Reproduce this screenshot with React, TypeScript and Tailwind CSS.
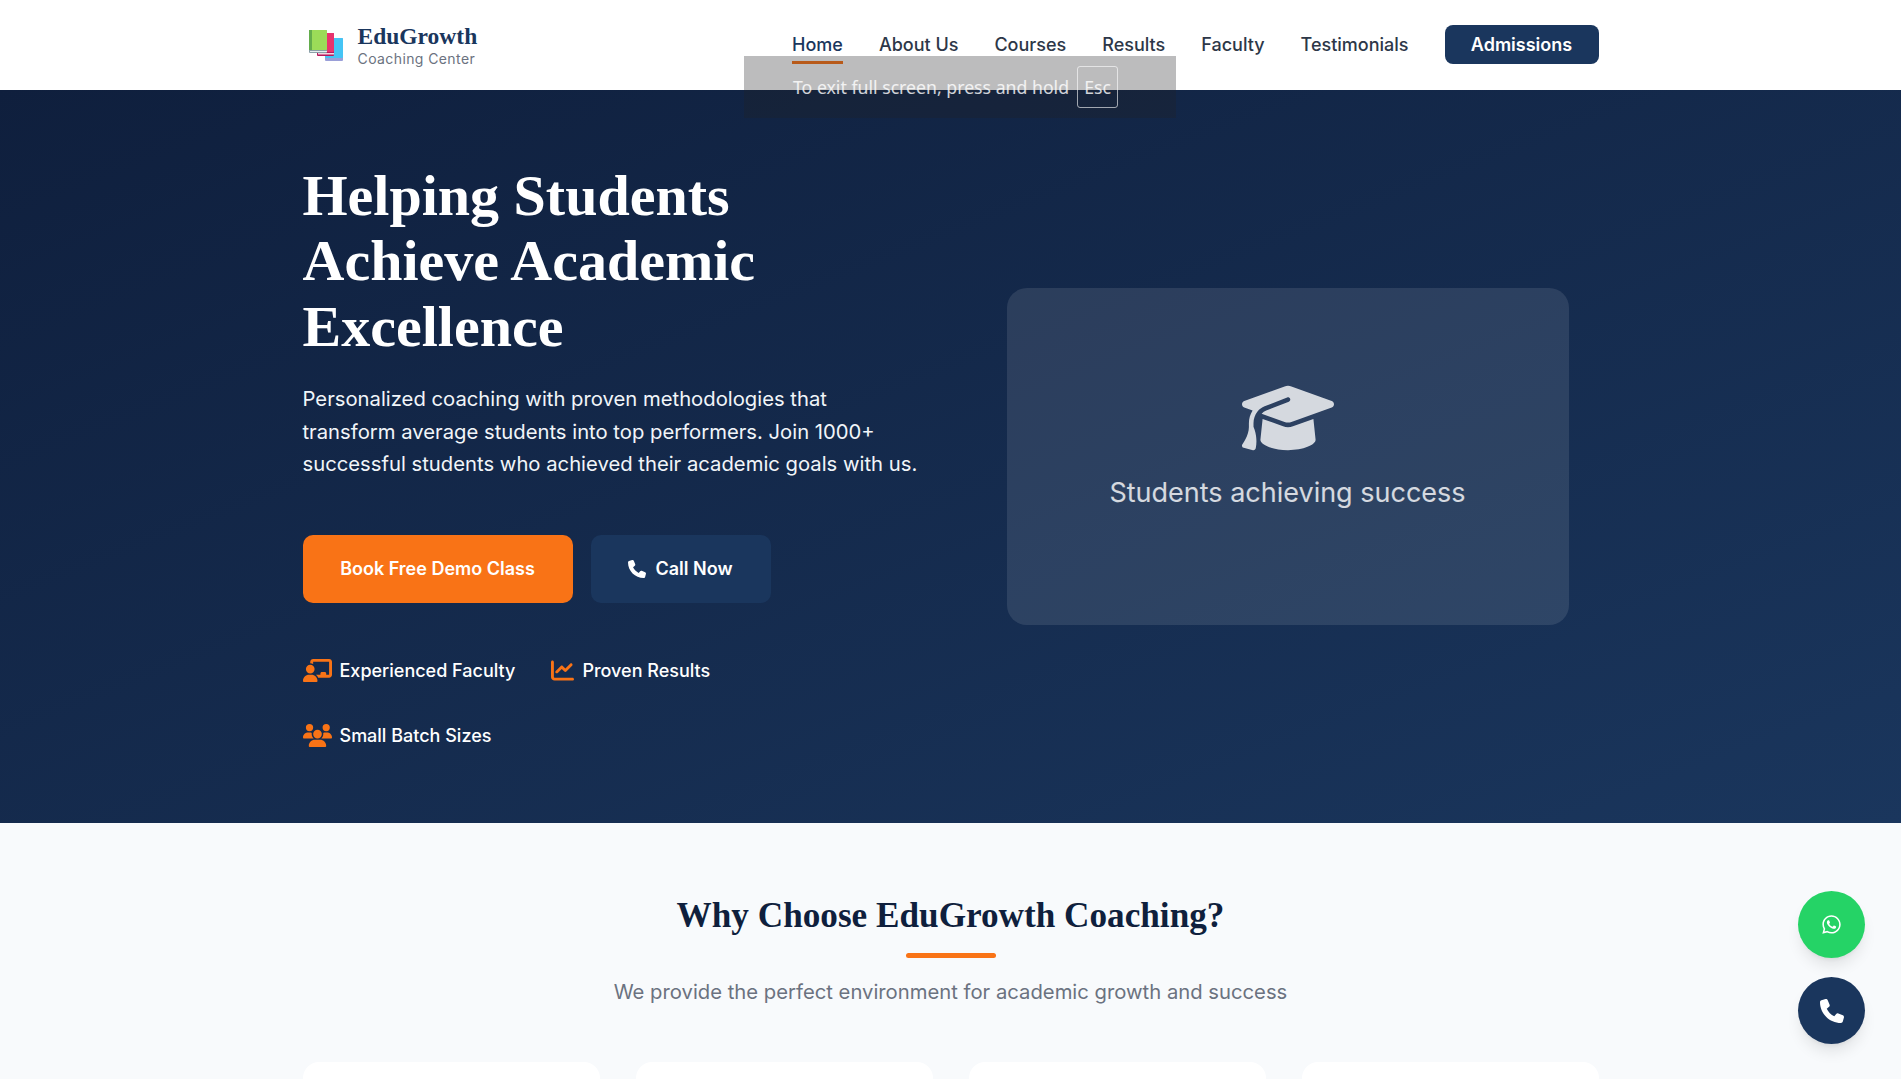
import { FaChalkboardUser, FaChartLine, FaGraduationCap, FaPhone, FaUsers, FaWhatsapp } from "react-icons/fa6";

const navLinks = ["About Us", "Courses", "Results", "Faculty", "Testimonials"];

function BooksLogo() {
  return (
    <svg width="34" height="31" viewBox="0 0 34 31" className="shrink-0 ml-[6px]">
      <rect x="16" y="8" width="18" height="23" rx="1" fill="#9a9fd8" />
      <rect x="16" y="8" width="18" height="20" rx="1" fill="#45c4f5" />
      <rect x="8" y="3" width="17" height="23" rx="1" fill="#b8175c" />
      <rect x="8" y="3" width="17" height="19" rx="1" fill="#e8336d" />
      <rect x="9" y="23" width="16" height="1.5" fill="#f3d5e0" />
      <rect x="0" y="0" width="18" height="23" rx="1" fill="#8aa0a8" />
      <rect x="0" y="0" width="18" height="20" rx="1" fill="#9bdc58" />
      <rect x="0" y="0" width="3" height="20" fill="#63ad4c" />
      <rect x="1" y="21" width="17" height="1" fill="#e5eef0" />
    </svg>
  );
}

function Header() {
  return (
    <header className="bg-white h-[90px]">
      <div className="w-[1296px] mx-auto h-full flex items-center justify-between">
        <div className="flex items-center gap-[15px]">
          <BooksLogo />
          <div className="mb-[1px]">
            <div className="text-[23.5px] leading-[28px] font-bold text-[#1a365d] font-['Liberation_Serif',serif]">EduGrowth</div>
            <div className="text-[14px] leading-[18px] text-[#6b7280] tracking-[0.4px]">Coaching Center</div>
          </div>
        </div>
        <nav className="flex items-center gap-9 mb-[2px] text-[18px] font-medium text-[#2d3748]">
          <a className="relative text-[#1a365d] py-[6.5px]">
            Home
            <span className="absolute left-0 right-0 bottom-0 h-[3px] bg-[#f97316]" />
          </a>
          {navLinks.map((l) => (
            <a key={l} className="py-[6.5px]">{l}</a>
          ))}
          <button className="w-[154px] h-[39px] rounded-lg bg-[#1a365d] text-white font-semibold">Admissions</button>
        </nav>
      </div>
    </header>
  );
}

function Feature({ icon, label }: { icon: React.ReactNode; label: string }) {
  return (
    <div className="flex items-center gap-2 h-[24px] text-[18px] font-medium text-white">
      <span className="text-[#f97316] flex">{icon}</span>
      {label}
    </div>
  );
}

function Hero() {
  return (
    <section className="h-[733px] bg-gradient-to-br from-[#0f1f3d] to-[#1a365d]">
      <div className="w-[1296px] mx-auto h-full flex items-center justify-between pr-[30px]">
        <div className="w-[640px] mb-[2px]">
          <h1 className="text-[58px] leading-[65.3px] font-bold text-white font-['Liberation_Serif',serif]">
            Helping Students
            <br />
            Achieve Academic
            <br />
            Excellence
          </h1>
          <p className="mt-6 w-[616px] text-[20.25px] leading-[32.6px] text-[#f1f5f9]">
            Personalized coaching with proven methodologies that transform average students into top performers. Join 1000+ successful students who achieved their academic goals with us.
          </p>
          <div className="mt-[54px] flex gap-[18px]">
            <button className="w-[270px] h-[68px] rounded-[10px] bg-[#f97316] text-white text-[18px] font-semibold">Book Free Demo Class</button>
            <button className="w-[180px] h-[68px] rounded-[10px] bg-[#1a365d] text-white text-[18px] font-semibold flex items-center justify-center gap-[9px]">
              <FaPhone className="text-[18px]" />
              Call Now
            </button>
          </div>
          <div className="mt-[56px] flex flex-wrap gap-x-9 gap-y-[41px] w-[500px]">
            <Feature icon={<FaChalkboardUser className="text-[29px]" />} label="Experienced Faculty" />
            <Feature icon={<FaChartLine className="text-[23px]" />} label="Proven Results" />
            <Feature icon={<FaUsers className="text-[29px]" />} label="Small Batch Sizes" />
          </div>
        </div>
        <div className="w-[562px] h-[337px] pb-[28px] rounded-[20px] bg-white/10 flex flex-col items-center justify-center">
          <FaGraduationCap className="text-[92px] text-white/80" />
          <div className="mt-[7px] text-[27px] leading-[43px] text-white/80">Students achieving success</div>
        </div>
      </div>
    </section>
  );
}

function WhyChoose() {
  return (
    <section className="bg-[#f8fafc] pt-[69px] pb-20">
      <div className="w-[1296px] mx-auto">
        <h2 className="text-center text-[35.2px] leading-[48px] font-bold text-[#0f1f3d] font-['Liberation_Serif',serif]">Why Choose EduGrowth Coaching?</h2>
        <div className="mx-auto mt-[13px] w-[90px] h-[5px] rounded bg-[#f97316]" />
        <p className="mt-[18px] text-center text-[20.25px] leading-[32px] text-[#6b7280]">We provide the perfect environment for academic growth and success</p>
        <div className="mt-[54px] grid grid-cols-4 gap-9">
          {[0, 1, 2, 3].map((i) => (
            <div key={i} className="h-[260px] rounded-2xl bg-white" />
          ))}
        </div>
      </div>
    </section>
  );
}

export default function App() {
  return (
    <div className="relative h-[1079px] overflow-hidden font-['Inter',sans-serif]">
      <Header />
      <Hero />
      <WhyChoose />

      {/* browser full screen notice */}
      <div className="absolute left-[744px] top-[56px] w-[432px] h-[62px] bg-[#202124]/30 flex items-center pl-[49px] gap-2 text-[17.7px] text-white/80 font-['Noto_Sans',sans-serif]">
        To exit full screen, press and hold
        <span className="w-[41px] h-[42px] rounded-[3px] border border-white/60 flex items-center justify-center">Esc</span>
      </div>

      <div className="fixed right-[36px] bottom-[35px] flex flex-col gap-[19px]">
        <a className="w-[67px] h-[67px] rounded-full bg-[#25d366] text-white flex items-center justify-center text-[21px] shadow-lg">
          <FaWhatsapp />
        </a>
        <a className="w-[67px] h-[67px] rounded-full bg-[#1a365d] text-white flex items-center justify-center text-[24px] shadow-lg">
          <FaPhone />
        </a>
      </div>
    </div>
  );
}
